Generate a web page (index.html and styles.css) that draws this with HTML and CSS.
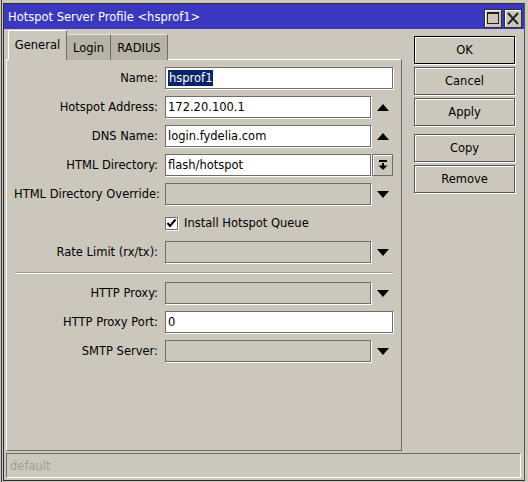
FILE: index.html
```html
<!DOCTYPE html>
<html>
<head>
<meta charset="utf-8">
<link rel="stylesheet" href="styles.css">
</head>
<body>
<div class="window">
  <div class="titlebar">
    <span class="title">Hotspot Server Profile &lt;hsprof1&gt;</span>
    <div class="tbtns">
      <span class="tbtn"><svg width="16" height="17" viewBox="0 0 16 17"><rect x="2.5" y="2.5" width="11" height="11" fill="none" stroke="#222" stroke-width="1"/><rect x="2" y="2" width="12" height="2" fill="#222"/></svg></span>
      <span class="tbtn"><svg width="16" height="17" viewBox="0 0 16 17"><path d="M3 3 L13 14 M13 3 L3 14" stroke="#222" stroke-width="2" fill="none"/></svg></span>
    </div>
  </div>
  <div class="main">
    <div class="left">
      <div class="tabs">
        <div class="tab active">General</div>
        <div class="tab">Login</div>
        <div class="tab">RADIUS</div>
      </div>
      <div class="panel">
        <div class="form">
          <label class="lbl">Name:</label>
          <div class="field wide"><span class="sel">hsprof1</span></div>

          <label class="lbl">Hotspot Address:</label>
          <div class="field">172.20.100.1</div>
          <span class="arrow"><svg width="12" height="7" viewBox="0 0 12 7"><polygon points="0,7 12,7 6,0" fill="#000"/></svg></span>

          <label class="lbl">DNS Name:</label>
          <div class="field">login.fydelia.com</div>
          <span class="arrow"><svg width="12" height="7" viewBox="0 0 12 7"><polygon points="0,7 12,7 6,0" fill="#000"/></svg></span>

          <label class="lbl">HTML Directory:</label>
          <div class="field">flash/hotspot</div>
          <span class="arrow"><span class="ibtn"><svg width="10" height="12" viewBox="0 0 10 12"><rect x="1" y="1" width="8" height="2" fill="#000"/><rect x="4" y="4" width="2" height="3" fill="#000"/><polygon points="0.5,6.5 9.5,6.5 5,11" fill="#000"/></svg></span></span>

          <label class="lbl">HTML Directory Override:</label>
          <div class="field off"></div>
          <span class="arrow"><svg width="12" height="7" viewBox="0 0 12 7"><polygon points="0,0 12,0 6,7" fill="#000"/></svg></span>

          <span></span>
          <div class="check wide"><span class="box"><svg width="11" height="11" viewBox="0 0 11 11"><path d="M1.5 5 L4 8 L9.5 1.5" stroke="#000" stroke-width="2" fill="none"/></svg></span><span>Install Hotspot Queue</span></div>

          <label class="lbl">Rate Limit (rx/tx):</label>
          <div class="field off"></div>
          <span class="arrow"><svg width="12" height="7" viewBox="0 0 12 7"><polygon points="0,0 12,0 6,7" fill="#000"/></svg></span>

          <div class="sep"></div>

          <label class="lbl">HTTP Proxy:</label>
          <div class="field off"></div>
          <span class="arrow"><svg width="12" height="7" viewBox="0 0 12 7"><polygon points="0,0 12,0 6,7" fill="#000"/></svg></span>

          <label class="lbl">HTTP Proxy Port:</label>
          <div class="field wide">0</div>

          <label class="lbl">SMTP Server:</label>
          <div class="field off"></div>
          <span class="arrow"><svg width="12" height="7" viewBox="0 0 12 7"><polygon points="0,0 12,0 6,7" fill="#000"/></svg></span>
        </div>
      </div>
    </div>
    <div class="actions">
      <div class="btn default">OK</div>
      <div class="btn">Cancel</div>
      <div class="btn">Apply</div>
      <div class="btn gap">Copy</div>
      <div class="btn">Remove</div>
    </div>
  </div>
  <div class="status">default</div>
</div>
</body>
</html>
```

FILE: styles.css
```css
html, body {
  margin: 0;
  padding: 0;
}
body {
  width: 528px;
  height: 482px;
  overflow: hidden;
  background: linear-gradient(to right, #cbc7bc 1px, #3a3a3a 1px, #3a3a3a 2px, #cbc7bc 2px);
  font-family: "DejaVu Sans", "Liberation Sans", sans-serif;
  font-size: 11px;
  color: #000;
}
.window {
  margin: 3px 0 0 3px;
  width: 522px;
  height: 478px;
  box-sizing: border-box;
  border: 1px solid #2e2e2e;
  border-right-color: #555;
  background: #cbc7bc;
}
.titlebar {
  height: 25px;
  background: #3a38be;
  display: flex;
  align-items: center;
  justify-content: space-between;
  padding: 0 2px 0 4px;
}
.title {
  color: #fff;
  font-size: 11.5px;
  padding-top: 1px;
}
.tbtns {
  display: flex;
  gap: 2px;
  padding-top: 3px;
}
.tbtn {
  width: 18px;
  height: 19px;
  box-sizing: border-box;
  background: #cbc7bc;
  border: 1px solid #2e2e2e;
  box-shadow: inset 1px 1px 0 #fff;
  display: flex;
  align-items: center;
  justify-content: center;
}
.main {
  display: flex;
  padding-left: 2px;
  height: 422px;
}
.left {
  width: 396px;
}
.tabs {
  display: flex;
  align-items: flex-end;
  height: 30px;
  margin-top: 1px;
  padding-left: 2px;
  position: relative;
  z-index: 2;
}
.tab {
  height: 26px;
  box-sizing: border-box;
  background: #b7b3a9;
  border-top: 1px solid #e6e3dc;
  border-right: 1px solid #6f6d69;
  display: flex;
  align-items: center;
  justify-content: center;
  padding: 0 6px;
  font-size: 11.5px;
}
.tab:nth-child(2) { width: 44px; }
.tab:nth-child(3) { width: 57px; }
.tab.active {
  width: 59px;
  height: 30px;
  background: #cbc7bc;
  border-top: 1px solid #fff;
  border-left: 1px solid #fff;
  padding-bottom: 2px;
}
.panel {
  margin-top: -1px;
  height: 392px;
  box-sizing: border-box;
  border-top: 1px solid #fff;
  border-left: 1px solid #fff;
  border-right: 1px solid #6f6d69;
  border-bottom: 1px solid #6f6d69;
  padding: 7px 0 0 7px;
  position: relative;
  z-index: 1;
}
.form {
  display: grid;
  grid-template-columns: 151px 206px 22px;
  grid-auto-rows: auto;
  row-gap: 7px;
  align-items: center;
}
.lbl {
  text-align: right;
  padding-right: 7px;
  white-space: nowrap;
  font-size: 11.5px;
}
.field {
  height: 22px;
  box-sizing: border-box;
  background: #fff;
  border: 1px solid #6f6d69;
  box-shadow: 1px 1px 0 #fff;
  display: flex;
  align-items: center;
  padding-left: 2px;
  font-size: 11.5px;
  white-space: nowrap;
}
.field.off {
  background: #cbc7bc;
}
.wide {
  grid-column: 2 / 4;
}
.sel {
  background: #0a246a;
  color: #fff;
  padding: 1px 1px;
}
.arrow {
  height: 22px;
  display: flex;
  align-items: center;
  justify-content: center;
  padding-left: 2px;
}
.ibtn {
  width: 21px;
  height: 22px;
  box-sizing: border-box;
  border: 1px solid #6f6d69;
  box-shadow: inset 1px 1px 0 #fff;
  display: flex;
  align-items: center;
  justify-content: center;
  margin-left: -1px;
}
.check {
  height: 22px;
  display: flex;
  align-items: center;
  gap: 6px;
  font-size: 11.5px;
}
.box {
  width: 13px;
  height: 13px;
  box-sizing: border-box;
  background: #fff;
  border: 1px solid #6f6d69;
  box-shadow: 1px 1px 0 #fff;
  display: flex;
  align-items: center;
  justify-content: center;
}
.sep {
  grid-column: 1 / 4;
  height: 1px;
  background: #9c9990;
  border-bottom: 1px solid #fff;
  margin: 2px 0 1px 1px;
}
.actions {
  margin-left: 12px;
  padding-top: 7px;
  width: 101px;
  display: flex;
  flex-direction: column;
  gap: 3px;
}
.btn {
  height: 28px;
  box-sizing: border-box;
  border: 1px solid #555;
  box-shadow: inset 1px 1px 0 #fff, 1px 1px 0 #fff;
  display: flex;
  align-items: center;
  justify-content: center;
  font-size: 11.5px;
}
.btn.default {
  border-color: #000;
}
.btn.gap {
  margin-top: 5px;
}
.status {
  margin: 2px 0 0 2px;
  width: 515px;
  height: 25px;
  box-sizing: border-box;
  border-top: 1px solid #6f6d69;
  border-left: 1px solid #6f6d69;
  border-bottom: 1px solid #fff;
  border-right: 1px solid #fff;
  color: #a09d95;
  padding-left: 3px;
  display: flex;
  align-items: center;
  font-size: 11.5px;
}
```
